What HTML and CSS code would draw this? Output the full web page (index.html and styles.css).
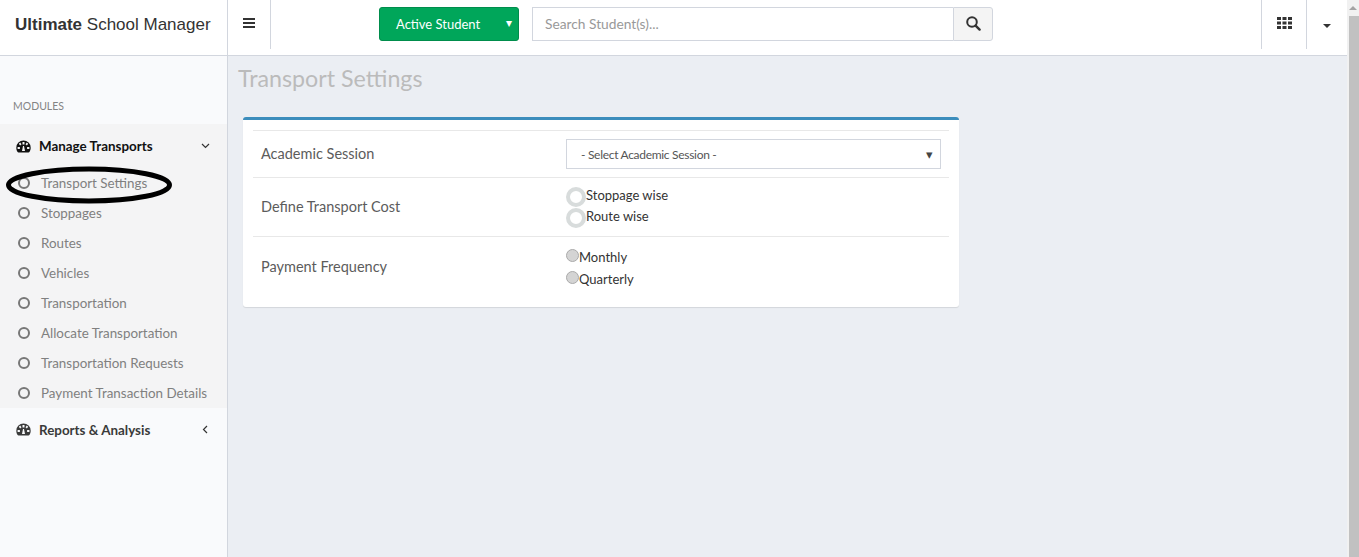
FILE: index.html
```html
<!DOCTYPE html>
<html lang="en">
<head>
<meta charset="utf-8">
<title>Transport Settings</title>
<link rel="stylesheet" href="styles.css">
</head>
<body>
<div class="app">
  <div class="page">
    <header class="topbar">
      <div class="brand"><b>Ultimate</b> School Manager</div>
      <button class="toggle" aria-label="Toggle navigation">
        <svg width="12" height="12" viewBox="0 0 12 12"><path d="M0 1h12v2H0zM0 5h12v2H0zM0 9h12v2H0z" fill="#333"/></svg>
      </button>
      <div class="search-area">
        <button class="student-btn"><span>Active Student</span><i class="btn-caret">▾</i></button>
        <div class="search">
          <input class="search-input" placeholder="Search Student(s)...">
          <button class="search-btn" aria-label="Search">
            <svg width="15" height="15" viewBox="0 0 15 15"><circle cx="6" cy="6" r="4.8" fill="none" stroke="#333" stroke-width="2"/><path d="M9.6 9.6l4 4" stroke="#333" stroke-width="2.4" stroke-linecap="round"/></svg>
          </button>
        </div>
      </div>
      <div class="top-actions">
        <div class="action action-apps">
          <svg width="15" height="12" viewBox="0 0 15 12" fill="#333"><path d="M0 0h4v3H0zM5.5 0h4v3h-4zM11 0h4v3h-4zM0 4.5h4v3H0zM5.5 4.500h4v3h-4zM11 4.500h4v3h-4zM0 9h4v3H0zM5.500 9h4v3h-4zM11 9h4v3h-4z"/></svg>
        </div>
        <div class="action action-user"><span class="caret"></span></div>
      </div>
    </header>
    <div class="body">
      <aside class="sidebar">
        <div class="modules">MODULES</div>
        <section class="group open">
          <a class="group-head">
            <svg class="gauge" width="15" height="13" viewBox="0 0 15 13"><path fill-rule="evenodd" fill="currentColor" d="M7.500 0.500A7.200 7.200 0 0 0 .3 7.700c0 1.500.4 3 1.300 4.200.2.300.5.500.9.500h10c.4 0 .7-.2.900-.5.900-1.200 1.300-2.700 1.300-4.200A7.200 7.200 0 0 0 7.500.5zM6.500 2h2v2.500h-2zM2.800 3.800l1.400-1.200 1.300 1.700-1.400 1.200zM1.600 7h2.300v2H1.600zM11.100 7h2.300v2h-2.300zM9.500 4.300l1.300-1.700 1.400 1.200-1.300 1.700zM7 6h1l1 5H6z"/></svg>
            <span>Manage Transports</span>
            <svg class="chev" width="9" height="6" viewBox="0 0 9 6"><path d="M1 1l3.500 3.500L8 1" fill="none" stroke="#333" stroke-width="1.200"/></svg>
          </a>
          <ul class="items">
            <li><i class="dot"></i>Transport Settings</li>
            <li><i class="dot"></i>Stoppages</li>
            <li><i class="dot"></i>Routes</li>
            <li><i class="dot"></i>Vehicles</li>
            <li><i class="dot"></i>Transportation</li>
            <li><i class="dot"></i>Allocate Transportation</li>
            <li><i class="dot"></i>Transportation Requests</li>
            <li><i class="dot"></i>Payment Transaction Details</li>
          </ul>
        </section>
        <section class="group">
          <a class="group-head">
            <svg class="gauge" width="15" height="13" viewBox="0 0 15 13"><path fill-rule="evenodd" fill="currentColor" d="M7.500 0.500A7.200 7.200 0 0 0 .3 7.700c0 1.500.4 3 1.300 4.200.2.300.5.500.9.500h10c.4 0 .7-.2.900-.5.900-1.200 1.300-2.700 1.300-4.200A7.200 7.200 0 0 0 7.500.5zM6.500 2h2v2.500h-2zM2.800 3.800l1.400-1.200 1.300 1.700-1.400 1.200zM1.600 7h2.300v2H1.600zM11.100 7h2.300v2h-2.300zM9.500 4.300l1.300-1.700 1.400 1.200-1.300 1.700zM7 6h1l1 5H6z"/></svg>
            <span>Reports &amp; Analysis</span>
            <svg class="chev chev-left" width="6" height="9" viewBox="0 0 6 9"><path d="M5 1L1.500 4.500 5 8" fill="none" stroke="#333" stroke-width="1.200"/></svg>
          </a>
        </section>
      </aside>
      <main class="content">
        <h1 class="title">Transport Settings</h1>
        <div class="card">
          <div class="rows">
            <div class="row row-session">
              <div class="label">Academic Session</div>
              <div class="value"><div class="select"><span>- Select Academic Session -</span><i class="select-arrow">▾</i></div></div>
            </div>
            <div class="row row-cost">
              <div class="label">Define Transport Cost</div>
              <div class="value">
                <label class="ring-opt"><i class="ring"></i><span>Stoppage wise</span></label>
                <label class="ring-opt"><i class="ring"></i><span>Route wise</span></label>
              </div>
            </div>
            <div class="row row-freq">
              <div class="label">Payment Frequency</div>
              <div class="value">
                <label class="radio-opt"><i class="radio"></i><span>Monthly</span></label>
                <label class="radio-opt"><i class="radio"></i><span>Quarterly</span></label>
              </div>
            </div>
          </div>
        </div>
      </main>
    </div>
  </div>
  <div class="scrollbar"><div class="scroll-up"></div><div class="scroll-thumb"></div></div>
</div>
<svg class="circle-mark" width="168" height="44" viewBox="0 0 168 44"><ellipse cx="84" cy="20" rx="80.500" ry="16" fill="none" stroke="#000" stroke-width="5"/></svg>
</body>
</html>
```

FILE: styles.css
```css
* { box-sizing: border-box; }
html, body { margin: 0; height: 100%; overflow: hidden; }
body { font-family: "Lato", "Noto Sans", sans-serif; font-size: 14px; color: #333; position: relative; }
button { font-family: inherit; cursor: pointer; }
ul { margin: 0; padding: 0; list-style: none; }
.app { display: flex; width: 1359px; height: 557px; }
.page { width: 1347px; display: flex; flex-direction: column; }

.topbar { height: 56px; flex: none; display: flex; background: #fff; border-bottom: 1px solid #d2d6de; }
.brand { width: 228px; flex: none; padding: 15px 0 0 15px; border-right: 1px solid #d2d6de; font-family: "Liberation Sans", Arial, sans-serif; font-size: 17px; line-height: 20px; color: #333; }
.toggle { width: 43px; height: 49px; flex: none; border: 0; border-right: 1px solid #d2d6de; background: none; padding: 0 0 3px 0; display: flex; align-items: center; justify-content: center; }
.search-area { display: flex; gap: 13px; padding: 7px 0 0 108px; flex: none; }
.student-btn { width: 140px; height: 34px; background: #00a65a; border: 1px solid #008d4c; border-radius: 3px; color: #fff; font-size: 13px; display: flex; align-items: center; padding: 0 6px 1px 16px; justify-content: space-between; }
.btn-caret { font-style: normal; font-size: 12px; line-height: 1; margin-top: -2px; }
.search { display: flex; width: 461px; height: 34px; }
.search-input { width: 421px; height: 34px; border: 1px solid #d2d6de; border-right: 0; padding: 0 12px 1px; font: 13.750px "Lato", sans-serif; outline: 0; }
.search-input::placeholder { color: #999; opacity: 1; }
.search-btn { width: 40px; height: 34px; border: 1px solid #d2d6de; border-radius: 0 3px 3px 0; background: #f4f4f4; display: flex; align-items: center; justify-content: center; padding: 0 0 2px; }
.top-actions { margin-left: auto; display: flex; }
.action { height: 49px; border-left: 1px solid #d2d6de; display: flex; justify-content: center; align-items: center; }
.action-apps { width: 45px; padding-bottom: 3px; }
.action-user { width: 41px; padding-top: 3px; }
.caret { width: 0; height: 0; border: 4px solid transparent; border-top-color: #333; border-bottom: 0; }

.body { flex: 1; display: flex; min-height: 0; }
.sidebar { width: 228px; flex: none; background: #f9fafc; border-right: 1px solid #d2d6de; padding-top: 44px; }
.modules { font-size: 10.500px; line-height: 13px; color: #848484; padding-left: 13px; height: 24px; }
.group.open { background: #f4f4f5; }
.group-head { display: flex; align-items: center; height: 45px; padding: 0 16px 2px; color: #3a3a3a; font-size: 13.400px; font-weight: 700; }
.group.open .group-head { color: #111; height: 44px; padding-bottom: 0; }
.group-head span { flex: 1; margin-left: 8px; }
.gauge { flex: none; }
.chev { flex: none; margin-right: 1px; }
.chev-left { margin-right: 3px; }
.items li { height: 30px; display: flex; align-items: center; font-size: 13.400px; color: #808080; padding-left: 18px; }
.dot { width: 12px; height: 12px; border: 2px solid #777; border-radius: 50%; margin-right: 11px; flex: none; }

.content { flex: 1; background: #ebeef3; padding: 7px 0 0 10px; }
.title { margin: 0 0 24px; font-size: 23.250px; line-height: 30px; font-weight: 400; color: #bbb; }
.card { margin-left: 5px; width: 716px; height: 190px; background: #fff; border-top: 3px solid #3c8dbc; border-radius: 3px; box-shadow: 0 1px 1px rgba(0,0,0,.1); padding: 10px 10px 0; }
.row { display: flex; border-top: 1px solid #e8e8e8; }
.label { width: 313px; padding: 0 0 2px 8px; font-size: 14.500px; font-weight: 400; color: #5c5c5c; align-self: center; }
.row-session { height: 47px; }
.row-session .value { padding-top: 8px; }
.row-cost { height: 59px; }
.row-cost .value { padding-top: 8px; }
.row-freq { height: 60px; }
.row-freq .label { padding-bottom: 0; }
.row-freq .value { padding-top: 12px; }
.select { width: 375px; height: 30px; border: 1px solid #d2d6de; display: flex; align-items: center; justify-content: space-between; padding: 0 7px 0 14px; font-size: 12px; letter-spacing: -.3px; color: #555; }
.select-arrow { font-style: normal; font-size: 13px; color: #444; }
.ring-opt { display: flex; align-items: center; height: 21px; font-size: 13px; color: #333; }
.ring-opt span { padding-bottom: 3px; }
.ring { width: 20px; height: 20px; border: 4px solid #d8dcdc; border-radius: 50%; flex: none; }
.radio-opt { display: flex; height: 22px; font-size: 13px; color: #333; }
.radio { width: 13px; height: 13px; border: 1px solid #aaa; border-radius: 50%; background: #d4d4d4; flex: none; }

.scrollbar { width: 12px; background: #f1f1f1; display: flex; flex-direction: column; }
.scroll-up { height: 16px; }
.scroll-up::after { content: ""; display: block; margin: 6px 2px 0 auto; width: 0; height: 0; border: 4px solid transparent; border-bottom-color: #a3a3a3; border-top: 0; }
.scroll-thumb { flex: 1; margin-left: 2px; background: #c1c1c1; }

.circle-mark { position: absolute; left: 5px; top: 165px; }
```
